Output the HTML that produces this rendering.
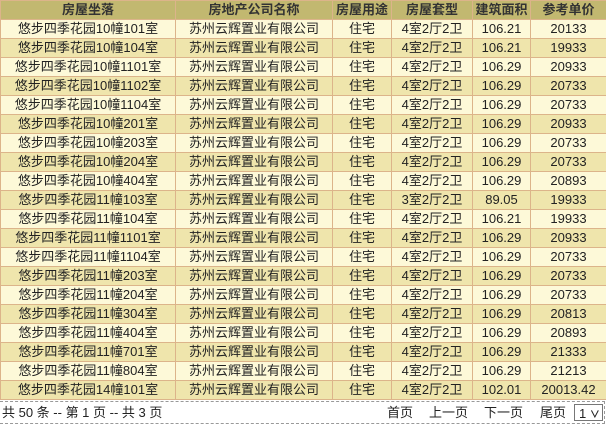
<!DOCTYPE html><html><head><meta charset="utf-8"><style>
body{margin:0;width:606px;height:424px;background:#fff;font-family:"Liberation Sans","Noto Sans CJK SC",sans-serif;font-size:13px;color:#222;overflow:hidden}
table{border-collapse:collapse;width:606px;table-layout:fixed;position:absolute;top:0;left:0}
td,th{border:1px solid #dcb48a;height:18px;padding:0;text-align:center;white-space:nowrap;line-height:18px}
th{background:#c2b870;font-weight:bold;color:#333}
tr:nth-child(even) td{background:#fdf9d8}
tr:nth-child(odd) td{background:#efe5ac}
.f{position:absolute;top:401px;left:0;width:604px;height:21px;border:1px dashed #999;border-left:none;line-height:21px;font-size:13px}
.f .l{position:absolute;left:2px}
.p{position:absolute;top:0}
.sel{position:absolute;left:574px;top:2px;border:1px solid #777;width:29px;height:17px;line-height:17px;box-sizing:border-box;padding-left:4px;font-size:13px}
</style></head><body>
<table>
<colgroup><col style="width:175px"><col style="width:157px"><col style="width:59px"><col style="width:81px"><col style="width:58px"><col style="width:76px"></colgroup>
<tr><th>房屋坐落</th><th>房地产公司名称</th><th>房屋用途</th><th>房屋套型</th><th>建筑面积</th><th>参考单价</th></tr>
<tr><td>悠步四季花园10幢101室</td><td>苏州云辉置业有限公司</td><td>住宅</td><td>4室2厅2卫</td><td>106.21</td><td>20133</td></tr>
<tr><td>悠步四季花园10幢104室</td><td>苏州云辉置业有限公司</td><td>住宅</td><td>4室2厅2卫</td><td>106.21</td><td>19933</td></tr>
<tr><td>悠步四季花园10幢1101室</td><td>苏州云辉置业有限公司</td><td>住宅</td><td>4室2厅2卫</td><td>106.29</td><td>20933</td></tr>
<tr><td>悠步四季花园10幢1102室</td><td>苏州云辉置业有限公司</td><td>住宅</td><td>4室2厅2卫</td><td>106.29</td><td>20733</td></tr>
<tr><td>悠步四季花园10幢1104室</td><td>苏州云辉置业有限公司</td><td>住宅</td><td>4室2厅2卫</td><td>106.29</td><td>20733</td></tr>
<tr><td>悠步四季花园10幢201室</td><td>苏州云辉置业有限公司</td><td>住宅</td><td>4室2厅2卫</td><td>106.29</td><td>20933</td></tr>
<tr><td>悠步四季花园10幢203室</td><td>苏州云辉置业有限公司</td><td>住宅</td><td>4室2厅2卫</td><td>106.29</td><td>20733</td></tr>
<tr><td>悠步四季花园10幢204室</td><td>苏州云辉置业有限公司</td><td>住宅</td><td>4室2厅2卫</td><td>106.29</td><td>20733</td></tr>
<tr><td>悠步四季花园10幢404室</td><td>苏州云辉置业有限公司</td><td>住宅</td><td>4室2厅2卫</td><td>106.29</td><td>20893</td></tr>
<tr><td>悠步四季花园11幢103室</td><td>苏州云辉置业有限公司</td><td>住宅</td><td>3室2厅2卫</td><td>89.05</td><td>19933</td></tr>
<tr><td>悠步四季花园11幢104室</td><td>苏州云辉置业有限公司</td><td>住宅</td><td>4室2厅2卫</td><td>106.21</td><td>19933</td></tr>
<tr><td>悠步四季花园11幢1101室</td><td>苏州云辉置业有限公司</td><td>住宅</td><td>4室2厅2卫</td><td>106.29</td><td>20933</td></tr>
<tr><td>悠步四季花园11幢1104室</td><td>苏州云辉置业有限公司</td><td>住宅</td><td>4室2厅2卫</td><td>106.29</td><td>20733</td></tr>
<tr><td>悠步四季花园11幢203室</td><td>苏州云辉置业有限公司</td><td>住宅</td><td>4室2厅2卫</td><td>106.29</td><td>20733</td></tr>
<tr><td>悠步四季花园11幢204室</td><td>苏州云辉置业有限公司</td><td>住宅</td><td>4室2厅2卫</td><td>106.29</td><td>20733</td></tr>
<tr><td>悠步四季花园11幢304室</td><td>苏州云辉置业有限公司</td><td>住宅</td><td>4室2厅2卫</td><td>106.29</td><td>20813</td></tr>
<tr><td>悠步四季花园11幢404室</td><td>苏州云辉置业有限公司</td><td>住宅</td><td>4室2厅2卫</td><td>106.29</td><td>20893</td></tr>
<tr><td>悠步四季花园11幢701室</td><td>苏州云辉置业有限公司</td><td>住宅</td><td>4室2厅2卫</td><td>106.29</td><td>21333</td></tr>
<tr><td>悠步四季花园11幢804室</td><td>苏州云辉置业有限公司</td><td>住宅</td><td>4室2厅2卫</td><td>106.29</td><td>21213</td></tr>
<tr><td>悠步四季花园14幢101室</td><td>苏州云辉置业有限公司</td><td>住宅</td><td>4室2厅2卫</td><td>102.01</td><td>20013.42</td></tr>
</table>
<div class="f"><span class="l">共 50 条 -- 第 1 页 -- 共 3 页</span><span class="p" style="left:387px">首页</span><span class="p" style="left:429px">上一页</span><span class="p" style="left:484px">下一页</span><span class="p" style="left:540px">尾页</span><span class="sel">1 <b style="font-size:10px">∨</b></span></div>
</body></html>
